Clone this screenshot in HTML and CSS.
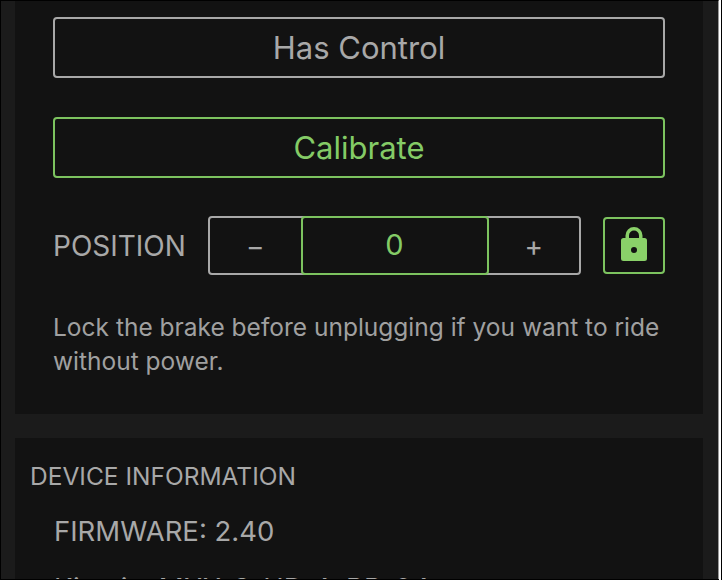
FILE: index.html
```html
<!DOCTYPE html>
<html lang="en">

<head>
    <meta charset="UTF-8">
    <meta name="viewport" content="width=device-width, initial-scale=1.0">
    <title>Trainer Settings</title>
    <link rel="stylesheet" href="styles.css">
</head>

<body>
    <div class="screen">
        <div class="frame">
            <section class="card card-controls">
                <button type="button" class="wide-button">Has Control</button>
                <button type="button" class="wide-button green">Calibrate</button>
                <div class="position-row">
                    <span class="position-label">POSITION</span>
                    <div class="stepper">
                        <button type="button" class="step-button">&minus;</button>
                        <div class="step-value">0</div>
                        <button type="button" class="step-button">+</button>
                    </div>
                    <button type="button" class="lock-button" aria-label="Lock">
                        <svg class="lock-icon" width="26" height="34" viewBox="0 0 26 34">
                            <path class="lock-shackle" d="M6.250 14V8.500a6.750 6.750 0 0 1 13.500 0V14"/>
                            <path class="lock-body" fill-rule="evenodd" d="M2.500 11h21a2.500 2.500 0 0 1 2.500 2.500v18a2.500 2.500 0 0 1-2.500 2.500h-21a2.500 2.500 0 0 1-2.500-2.500v-18a2.500 2.500 0 0 1 2.500-2.500zM13 20a3 3 0 1 0 0 6a3 3 0 0 0 0-6z"/>
                        </svg>
                    </button>
                </div>
                <p class="hint">Lock the brake before unplugging if you want to ride without power.</p>
            </section>
            <section class="card card-info">
                <h2 class="info-title">DEVICE INFORMATION</h2>
                <p class="info-line">FIRMWARE: 2.40</p>
                <p class="info-line">Kinetic: MXX-S-HD-A-BB-04</p>
            </section>
        </div>
    </div>
</body>

</html>
```

FILE: styles.css
```css
html, body {
    margin: 0;
    padding: 0;
    height: 100%;
    overflow: hidden;
    background-color: #000;
}

/* white sliver down the right side of the photo */
.screen {
    width: 721px;
    height: 580px;
    box-sizing: border-box;
    border-right: 2px solid #fff;
    overflow: hidden;
}

.frame {
    height: 579px;
    margin-top: 0;
    padding: 0 15px 0 14px;
    box-sizing: border-box;
    overflow: hidden;
    background-color: #1b1b1b;
    border-top: 1px solid #000;
    border-left: 1px solid #000;
    border-right: 1px solid #999;
    font-family: Inter, "Liberation Sans", sans-serif;
    color: #a8a8a8;
}

.card {
    background-color: #121212;
}

.card-controls {
    height: 413px;
    padding: 16px 38px 0 38px;
    box-sizing: border-box;
    margin-bottom: 24px;
}

.wide-button {
    display: block;
    width: 100%;
    height: 61px;
    margin-bottom: 38px;
    background: transparent;
    border: 2px solid #a8a8a8;
    border-radius: 4px;
    color: #a8a8a8;
    font-family: inherit;
    font-size: 31px;
}

.wide-button.green {
    margin-top: 39px;
    border-color: #7cc35f;
    color: #84cb66;
}

.position-row {
    display: flex;
    align-items: center;
}

.position-label {
    font-size: 28px;
    width: 155px;
}

.stepper {
    display: flex;
    width: 373px;
    height: 59px;
    box-sizing: border-box;
    border: 2px solid #a8a8a8;
    border-radius: 4px;
}

.step-button {
    flex: 1;
    background: transparent;
    border: none;
    color: #a8a8a8;
    font-family: inherit;
    font-size: 28px;
}

.step-value {
    width: 188px;
    height: 59px;
    margin-top: -2px;
    box-sizing: border-box;
    border: 2px solid #7cc35f;
    border-radius: 4px;
    color: #84cb66;
    font-size: 29px;
    line-height: 53px;
    text-align: center;
}

.lock-button {
    width: 62px;
    height: 57px;
    margin-left: 22px;
    padding: 0 0 3px 0;
    background: transparent;
    border: 2px solid #7cc35f;
    border-radius: 4px;
}

.lock-icon {
    display: block;
    margin: 0 auto;
}

.lock-shackle {
    fill: none;
    stroke: #8ad169;
    stroke-width: 3.5;
}

.lock-body {
    fill: #8ad169;
}

.hint {
    margin: 35px 0 0 0;
    font-size: 24.500px;
    line-height: 34px;
    color: #a0a0a0;
}

.card-info {
    height: 200px;
    padding: 23px 15px 0 15px;
}

.info-title {
    margin: 0;
    font-size: 24.500px;
    font-weight: 400;
    line-height: 30px;
}

.info-line {
    margin: 23px 0 0 24px;
    font-size: 27.500px;
    line-height: 34px;
}
```
